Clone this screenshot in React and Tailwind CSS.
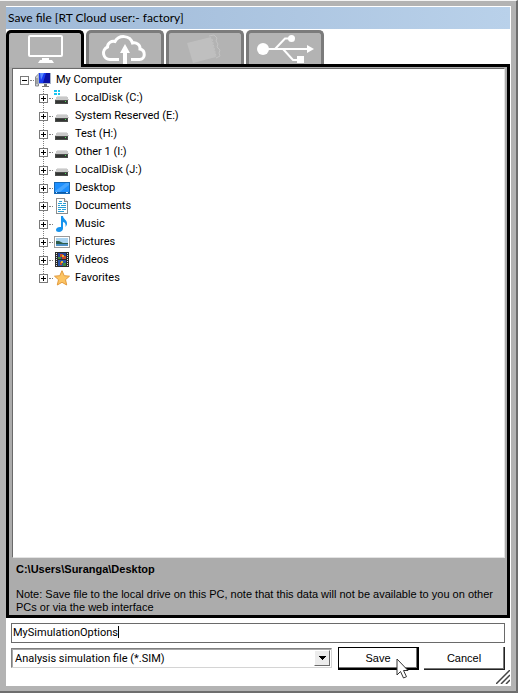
import { useState } from "react";

function ComputerIcon() {
  return (
    <svg width="16" height="16" viewBox="0 0 16 16">
      <path d="M0.500 5l3-3v12h-3z" fill="#c9ccd0" stroke="#85898e" />
      <path d="M2 6v6" stroke="#777" />
      <rect x="3" y="1" width="13" height="11" fill="#a9b4c8" />
      <rect x="4" y="1" width="11" height="10" fill="#0a12a4" />
      <path d="M4 1h7L8 11H4z" fill="#1a3df0" />
      <path d="M5 1h4L6 8z" fill="#5b8bff" />
      <path d="M9 12h3v2h2v1H7v-1h2z" fill="#777" />
    </svg>
  );
}

function DriveIcon({ system }) {
  return (
    <svg width="16" height="16" viewBox="0 0 16 16" shapeRendering="crispEdges">
      {system && <path d="M0 0h3v2H0zM4 0h2v2H4zM0 3h3v2H0zM4 3h2v2H4z" fill="#19c5f0" />}
      <path d="M3 6h10l2 4H1z" fill="#c9c9c9" />
      <path d="M3 6h10v1H3z" fill="#dedede" />
      <rect x="1" y="10" width="13" height="4" fill="#4b4d4b" />
      <rect x="2" y="11" width="11" height="2" fill="#333533" />
      <rect x="11" y="11" width="1" height="1" fill="#4fe35c" />
    </svg>
  );
}

function DesktopIcon() {
  return (
    <svg width="16" height="16" viewBox="0 0 16 16">
      <rect x="0.500" y="2.500" width="15" height="11" fill="#1e90ff" stroke="#1569b8" />
      <path d="M1 11L12 3h3v2L6 12H1z" fill="#45a5ff" />
      <path d="M1 12.500h14" stroke="#0d5ca8" />
      <path d="M2 12.500h1M12 12.500h2" stroke="#cfe8ff" />
    </svg>
  );
}

function DocumentIcon() {
  return (
    <svg width="16" height="16" viewBox="0 0 16 16" shapeRendering="crispEdges">
      <path d="M2.500 0.500h8l3 3v12h-11z" fill="#fff" stroke="#8c8c8c" />
      <path d="M10.500 0.500v3h3" fill="#ddd" stroke="#8c8c8c" />
      <path d="M5 3h3v1H5zM4 5h4v1H4zM9 5h3v1H9zM4 7h2v1H4zM7 7h5v1H7zM4 9h8v1H4zM4 11h3v1H4zM8 11h4v1H8zM4 13h6v1H4z" fill="#2b9fd6" />
    </svg>
  );
}

function MusicIcon() {
  return (
    <svg width="16" height="16" viewBox="0 0 16 16">
      <path d="M7 0h2c0 3 4.500 4 4 8-.2 1.300-.8 2-1.500 3 .6-3-.5-4.500-2.500-5v6.500C9 14.500 7 16 5 16s-3-1-3-2.300C2 12 4.500 10.500 7 11z" fill="#1593ee" />
    </svg>
  );
}

function PictureIcon() {
  return (
    <svg width="16" height="16" viewBox="0 0 16 16">
      <rect x="0.500" y="2.500" width="15" height="11" fill="#fff" stroke="#9a9a9a" />
      <rect x="2" y="4" width="12" height="8" fill="#a9d3f0" />
      <path d="M2 7l3 0 4 2h5v1H2z" fill="#2e5d4a" />
      <rect x="2" y="10" width="12" height="2" fill="#4e8fc4" />
    </svg>
  );
}

function VideoIcon() {
  return (
    <svg width="16" height="16" viewBox="0 0 16 16" shapeRendering="crispEdges">
      <rect x="1" y="0" width="14" height="15" fill="#2c2c2c" />
      <path d="M2.500 1v14M13.500 1v14" stroke="#e4e4e4" strokeDasharray="1 1" />
      <rect x="4" y="1" width="8" height="6" fill="#24449c" />
      <rect x="4" y="8" width="8" height="6" fill="#2a55a8" />
      <path d="M6 2h3v2h3v3H8V5H6zM6 10h2v3H6z" fill="#c8472c" />
      <path d="M8 3h2v2H8zM7 9h2v2H7z" fill="#e2b52d" />
      <path d="M4 5h3v2H4zM9 11h3v3H9z" fill="#3d8a3c" />
    </svg>
  );
}

function StarIcon() {
  return (
    <svg width="16" height="16" viewBox="0 0 16 16">
      <path d="M8 .7l2.200 5 5.300.5-4 3.500 1.200 5.300L8 12.300 3.300 15l1.200-5.300-4-3.500 5.300-.5z" fill="#fcc463" stroke="#e29a3c" />
    </svg>
  );
}

function MonitorGlyph() {
  return (
    <svg width="72" height="31" viewBox="0 0 72 31" fill="none">
      <rect x="20" y="3" width="33" height="20" rx="1" stroke="#fff" strokeWidth="2" />
      <path d="M33 25h7v2h3l2 3H29l2-3h2z" fill="#fff" />
    </svg>
  );
}

function CloudGlyph() {
  return (
    <svg width="72" height="31" viewBox="0 0 72 31" fill="none">
      <path d="M30 26.500H21a6.500 6.500 0 0 1-2.500-12.500c0-4 4-6.500 7.500-5.500 4-7 15-6.500 17.500 1.500 4-1 8 2 7.500 6 6 1.500 5.500 10.500-.5 10.500H42" stroke="#fff" strokeWidth="3" />
      <path d="M36 11l5 9h-3v11h-4V20h-3z" fill="#fff" />
    </svg>
  );
}

function FolderGlyph() {
  return (
    <svg width="72" height="31" viewBox="0 0 72 31" fill="none">
      <path d="M18 10l24-6 5 20-23 6z" fill="#bfbfbf" />
      <path d="M40 3l5-1 3 3-1 3 2 3-1 3 3 3-1 3 1 3-4 2" stroke="#c3c3c3" />
      <path d="M43 6l4 17" stroke="#c3c3c3" strokeDasharray="2 1" />
    </svg>
  );
}

function UsbGlyph() {
  return (
    <svg width="72" height="31" viewBox="0 0 72 31" fill="none">
      <path d="M14 16h45M26 16L36 5.500h6M34 16l10 11h6" stroke="#fff" strokeWidth="2" />
      <circle cx="14" cy="16" r="6" fill="#fff" />
      <circle cx="42.500" cy="5.500" r="3.500" fill="#fff" />
      <path d="M58 12l7 4-7 4zM48 23h7v7h-7z" fill="#fff" />
    </svg>
  );
}

const tabs = [
  { id: "local", label: "This computer", Glyph: MonitorGlyph },
  { id: "cloud", label: "Cloud", Glyph: CloudGlyph },
  { id: "folder", label: "Shared folder", Glyph: FolderGlyph },
  { id: "usb", label: "USB", Glyph: UsbGlyph },
];

const items = [
  { name: "LocalDisk (C:)", icon: <DriveIcon system /> },
  { name: "System Reserved (E:)", icon: <DriveIcon /> },
  { name: "Test (H:)", icon: <DriveIcon /> },
  { name: "Other 1 (I:)", icon: <DriveIcon /> },
  { name: "LocalDisk (J:)", icon: <DriveIcon /> },
  { name: "Desktop", icon: <DesktopIcon /> },
  { name: "Documents", icon: <DocumentIcon /> },
  { name: "Music", icon: <MusicIcon /> },
  { name: "Pictures", icon: <PictureIcon /> },
  { name: "Videos", icon: <VideoIcon /> },
  { name: "Favorites", icon: <StarIcon /> },
];

function TreeRow({ name, icon, open, onToggle }) {
  return (
    <div className="relative flex h-[18px] items-center">
      <button
        type="button"
        aria-label={`${open ? "Collapse" : "Expand"} ${name}`}
        onClick={onToggle}
        className="grid size-[9px] place-items-center border border-[#7a7a7a] bg-white"
      >
        <svg width="5" height="5" viewBox="0 0 5 5" shapeRendering="crispEdges" stroke="#000">
          <path d={open ? "M0 2.500h5" : "M0 2.500h5M2.500 0v5"} />
        </svg>
      </button>
      <span className="mr-px ml-px w-1 border-t border-dotted border-[#808080]" />
      {icon}
      <span className="pb-0.5 pl-[5px]">{name}</span>
    </div>
  );
}

export default function App() {
  const [tab, setTab] = useState("local");
  const [open, setOpen] = useState(true);
  const [fileName, setFileName] = useState("MySimulationOptions");

  return (
    <div className="flex min-h-screen flex-col border-t border-r-2 border-b-2 border-t-[#f4f4f4] border-r-[#6e6e6e] border-b-[#6e6e6e] bg-[#b3b3b3] pt-[5px] pr-[5px] pb-[5px] pl-[6px] font-['Liberation_Sans',Arial,sans-serif] text-[11px] leading-[13px] text-black">
      <div className="flex flex-1 flex-col bg-white">
        <header className="my-px mr-px flex h-[22px] items-center bg-linear-to-r from-[#9fb9d7] to-[#b9d1ea] pl-0.5">
          <h1 className="font-[Lato,'Open_Sans',sans-serif] text-xs">Save file [RT Cloud user:- factory]</h1>
        </header>

        {/* Storage tabs, the active one runs into the panel below */}
        <div role="tablist" className="flex h-[34px] gap-0.5">
          {tabs.map(({ id, label, Glyph }) => (
            <button
              key={id}
              type="button"
              role="tab"
              aria-label={label}
              aria-selected={tab === id}
              onClick={() => setTab(id)}
              className={
                tab === id
                  ? "relative z-10 flex h-[37px] w-[78px] items-start rounded-t-[5px] border-x-[3px] border-t-[3px] border-black bg-[#b3b3b3]"
                  : "flex h-[34px] w-[78px] items-start rounded-t-[5px] border-x-[3px] border-t-[3px] border-[#7b7b7b] bg-[#b3b3b3]"
              }
            >
              <Glyph />
            </button>
          ))}
        </div>

        <section className="mr-px flex flex-1 flex-col border-[3px] border-black bg-[#acacac]">
          <div className="mt-px mr-0.5 ml-[3px] flex-1 border border-t-[#6a6a6a] border-r-[#e3e3e3] border-b-[#e3e3e3] border-l-[#6a6a6a] bg-white pt-0.5 pl-[7px] font-[Roboto,Arial,sans-serif]">
            <TreeRow name="My Computer" icon={<ComputerIcon />} open={open} onToggle={() => setOpen(!open)} />
            {open && (
              <div className="relative pl-[19px]">
                <span className="absolute top-0 bottom-[9px] left-[23px] border-l border-dotted border-[#808080]" />
                {items.map((item) => (
                  <TreeRow key={item.name} {...item} />
                ))}
              </div>
            )}
          </div>
          <div className="h-[57px] pt-[5px] pl-[7px]">
            <p className="font-bold">C:\Users\Suranga\Desktop</p>
            <p className="mt-3">
              Note: Save file to the local drive on this PC, note that this data will not be available to you on other PCs or via the web interface
            </p>
          </div>
        </section>

        <form className="flex flex-col pt-[5px] pr-[6px] pl-[5px]" onSubmit={(e) => e.preventDefault()}>
          <div className="relative font-[Roboto,Arial,sans-serif]">
            <input
              type="text"
              aria-label="File name"
              value={fileName}
              onChange={(e) => setFileName(e.target.value)}
              className="block h-5 w-full border border-[#6a6a6a] bg-white pb-0.5 pl-px outline-none"
            />
            <span className="absolute top-[3px] left-[107px] h-3 w-px bg-black" />
          </div>

          <div className="mt-1 flex items-start">
            <div className="relative mt-px mr-1.5 flex-1 font-[Roboto,Arial,sans-serif]">
              <select
                aria-label="File type"
                className="block h-5 w-full appearance-none border border-t-[#808080] border-r-[#d4d4d4] border-b-[#d4d4d4] border-l-[#808080] bg-white pl-[3px] shadow-[inset_1px_1px_0_#a8a8a8] outline-none"
              >
                <option>Analysis simulation file (*.SIM)</option>
              </select>
              <span className="pointer-events-none absolute top-0.5 right-0.5 grid h-4 w-4 place-items-center border border-t-white border-r-[#6a6a6a] border-b-[#6a6a6a] border-l-white bg-[#ececec]">
                <svg width="7" height="4" viewBox="0 0 7 4" shapeRendering="crispEdges">
                  <path d="M0 0h7L3.500 4z" />
                </svg>
              </span>
            </div>
            <button type="submit" className="relative mr-[5px] h-[23px] w-[81px] border border-r-2 border-b-2 border-black bg-white shadow-[inset_-1px_-1px_0_#777]">
              Save
              {/* Pointer resting on the button */}
              <svg className="absolute top-2.5 left-[57px]" width="13" height="21" viewBox="0 0 13 21">
                <path d="M1 1v16l3.500-3.500L7.500 20l3-1.300-3-6.200H12z" fill="#fff" stroke="#333" />
              </svg>
            </button>
            <button type="button" className="h-[23px] w-[81px] border-r border-b border-[#222] bg-white shadow-[inset_-1px_-1px_0_#777]">
              Cancel
            </button>
          </div>
        </form>

        <div className="flex h-4 items-end justify-end pr-px pb-0.5">
          <svg width="14" height="14" viewBox="0 0 14 14" stroke="#444" strokeWidth="1.500">
            <path d="M0 14L14 0M5 14l9-9M10 14l4-4" />
          </svg>
        </div>
      </div>
    </div>
  );
}
